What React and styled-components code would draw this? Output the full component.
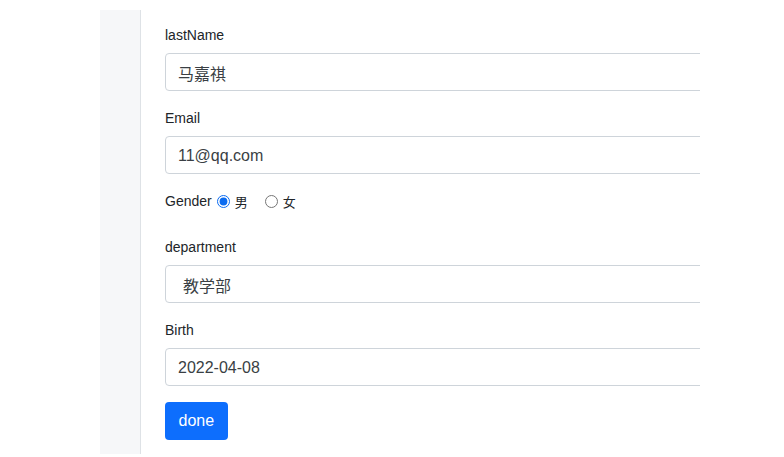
import React from "react";
import styled, { createGlobalStyle } from "styled-components";

const Global = createGlobalStyle`
  html, body { margin: 0; padding: 0; background: #fff; }
  body { font-family: "Liberation Sans", Roboto, Arial, sans-serif; color: #212529; }
  * { box-sizing: border-box; }
`;

const Page = styled.div`
  display: flex;
  padding: 10px 0 0 100px;
  height: 457px;
  overflow: hidden;
`;

const Sidebar = styled.aside`
  width: 41px;
  height: 444px;
  background: #f6f7f9;
  border-right: 1px solid #dee2e6;
  flex-shrink: 0;
`;

const Main = styled.main`
  width: 559px;
  overflow: hidden;
  padding: 14px 0 0 24px;
`;

const Form = styled.form`
  width: 640px;
  display: flex;
  flex-direction: column;
`;

const Group = styled.div`
  margin-bottom: 16px;
`;

const Label = styled.label`
  display: block;
  font-size: 14px;
  line-height: 21px;
  padding-top: 1px;
  margin-bottom: 7px;
  color: #212529;
`;

const Input = styled.input`
  display: block;
  width: 100%;
  height: 38px;
  padding: 7px 12px 5px;
  font-family: "Liberation Sans", "Noto Sans CJK SC", sans-serif;
  font-size: 16px;
  color: #3a3f44;
  border: 1px solid #ced4da;
  border-radius: 4px;
  background: #fff;
  outline: none;
`;

const SelectBox = styled.div`
  height: 38px;
  padding: 1px 12px 0 17px;
  display: flex;
  align-items: center;
  font-family: "Noto Sans CJK SC", sans-serif;
  font-size: 16px;
  color: #3a3f44;
  border: 1px solid #ced4da;
  border-radius: 4px;
`;

const RadioRow = styled.div`
  display: flex;
  align-items: center;
  height: 22px;
  font-size: 14px;
  margin-bottom: 24px;
`;

const Radio = styled.input.attrs({ type: "radio" })`
  width: 13px;
  height: 13px;
  margin: 0 5px 0 ${(p) => p.$ml}px;
  accent-color: #0b6bf0;
`;

const RadioText = styled.span`
  font-family: "Noto Sans CJK SC", sans-serif;
  font-size: 13px;
`;

const Button = styled.button`
  align-self: flex-start;
  height: 38px;
  padding: 0 13.5px;
  font-family: "Liberation Sans", sans-serif;
  font-size: 16px;
  color: #fff;
  background: #0d6efd;
  border: none;
  border-radius: 4px;
`;

export default function App() {
  return (
    <>
      <Global />
      <Page>
        <Sidebar />
        <Main>
          <Form onSubmit={(e) => e.preventDefault()}>
            <Group>
              <Label>lastName</Label>
              <Input defaultValue="马嘉祺" />
            </Group>
            <Group>
              <Label>Email</Label>
              <Input defaultValue="11@qq.com" />
            </Group>
            <RadioRow>
              Gender
              <Radio name="g" defaultChecked $ml={5} />
              <RadioText>男</RadioText>
              <Radio name="g" $ml={17} />
              <RadioText>女</RadioText>
            </RadioRow>
            <Group>
              <Label>department</Label>
              <SelectBox>教学部</SelectBox>
            </Group>
            <Group>
              <Label>Birth</Label>
              <Input defaultValue="2022-04-08" />
            </Group>
            <Button>done</Button>
          </Form>
        </Main>
      </Page>
    </>
  );
}
